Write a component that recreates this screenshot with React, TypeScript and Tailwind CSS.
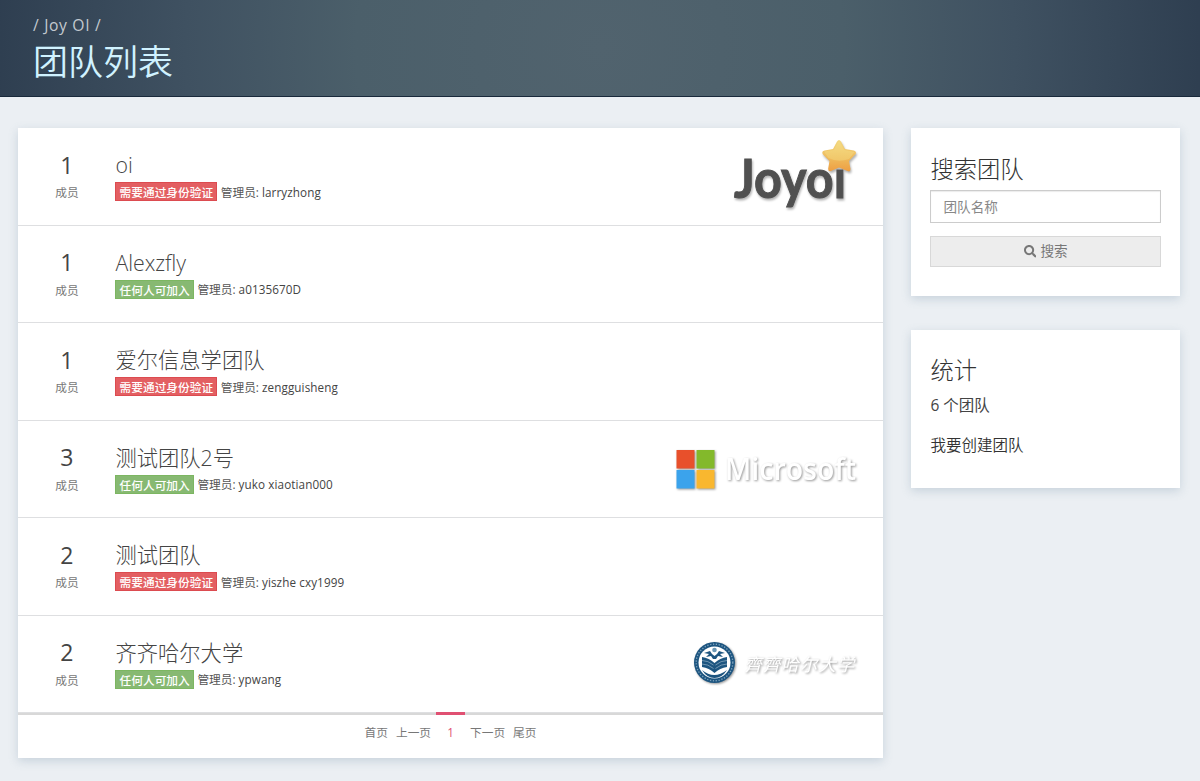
import { FaSearch } from "react-icons/fa";

type Team = {
  count: number;
  name: string;
  open: boolean;
  admins: string;
  logo?: "joyoi" | "microsoft" | "qqhru";
};

const teams: Team[] = [
  { count: 1, name: "oi", open: false, admins: "larryzhong", logo: "joyoi" },
  { count: 1, name: "Alexzfly", open: true, admins: "a0135670D" },
  { count: 1, name: "爱尔信息学团队", open: false, admins: "zengguisheng" },
  { count: 3, name: "测试团队2号", open: true, admins: "yuko xiaotian000", logo: "microsoft" },
  { count: 2, name: "测试团队", open: false, admins: "yiszhe cxy1999" },
  { count: 2, name: "齐齐哈尔大学", open: true, admins: "ypwang", logo: "qqhru" },
];

function JoyoiLogo() {
  return (
    <svg className="h-[84px] w-[130px] drop-shadow-[1px_2px_1px_rgba(0,0,0,0.3)]" viewBox="0 0 130 84">
      <defs>
        <linearGradient id="star" x1="0" y1="0" x2="0" y2="1">
          <stop offset="0" stopColor="#f3d880" />
          <stop offset="0.6" stopColor="#efb95a" />
          <stop offset="1" stopColor="#ee9e42" />
        </linearGradient>
      </defs>
      <g fill="#505050" stroke="#505050" strokeWidth="1" fontFamily="Lato, sans-serif" fontWeight="700" fontSize="53">
        <text x="2" y="63" textLength="112" lengthAdjust="spacingAndGlyphs">
          Joyoı
        </text>
      </g>
      <path
        d="M105 6.500 Q107 3.500 109 6.500 L113 14 L122 15.500 Q125.500 17 123 19.800 L117 26 L118.500 34 Q118.500 37.500 115.500 36 L107 32.500 L99 36 Q96 37 96.200 33.500 L97.500 26 L91 19.500 Q89 16.500 92.500 15.500 L101 14 Z"
        fill="url(#star)"
      />
      <path d="M92 16.500 L101.500 15 L107 6 L112.500 15 L122.500 17 L117 24 Q106 28 96.500 23 Z" fill="#f6e58d" opacity="0.35" />
    </svg>
  );
}

function MicrosoftLogo() {
  return (
    <svg className="h-[50px] w-[196px] drop-shadow-[1px_1px_1px_rgba(0,0,0,0.4)]" viewBox="0 0 196 50">
      <rect x="6.500" y="5" width="18" height="18.500" fill="#e8502b" />
      <rect x="26.500" y="5" width="18" height="18.500" fill="#83b92b" />
      <rect x="6.500" y="25" width="18" height="18.500" fill="#3ba3ec" />
      <rect x="26.500" y="25" width="18" height="18.500" fill="#f9b72f" />
      <text x="55" y="35" textLength="131" lengthAdjust="spacingAndGlyphs" fill="#fff" fontFamily="Open Sans, sans-serif" fontWeight="600" fontSize="30">
        Microsoft
      </text>
    </svg>
  );
}

function QqhruLogo() {
  return (
    <svg className="h-[52px] w-[178px] drop-shadow-[1px_1px_1px_rgba(0,0,0,0.42)]" viewBox="0 0 178 52">
      <circle cx="26.500" cy="25.500" r="20.500" fill="#1d5580" />
      <circle cx="26.500" cy="25.500" r="18.300" fill="none" stroke="#7fa3bc" strokeWidth="1.300" strokeDasharray="1.300 1.600" />
      <circle cx="26.500" cy="25.500" r="16" fill="#fff" />
      <circle cx="26.500" cy="13" r="2.300" fill="#6b98b5" />
      <path d="M16 16 L22 14 L24 17 L26.500 19 L29 17 L31 14 L37 16 L32 17 L35 20 L30 19 L28 22 H25 L23 19 L18 20 L21 17 Z" fill="#1d5580" />
      <path d="M14 20 Q21 21 26.500 26 Q32 21 39 20 V30 Q32 31 26.500 36 Q21 31 14 30 Z" fill="#1d5580" />
      <path d="M14 23.500 Q20 23.500 25.500 28 M14 27 Q20 27 25.500 31.500 M39 23.500 Q33 23.500 27.500 28 M39 27 Q33 27 27.500 31.500" fill="none" stroke="#a9c2d2" strokeWidth=".6" />
      <path d="M14 33 Q26 43 39 33 Q34 41 26.500 41 Q19 41 14 33 Z" fill="#1d5580" />
      <g transform="translate(7.500 1) skewX(-14)">
        <text x="57" y="33.500" textLength="110" lengthAdjust="spacing" fill="#fff" fontFamily="Noto Sans CJK SC, sans-serif" fontWeight="400" fontSize="17.500">
          齊齊哈尔大学
        </text>
      </g>
    </svg>
  );
}

function TeamRow({ team }: { team: Team }) {
  return (
    <div className="flex h-[97.5px] border-b border-[#dedfe1]">
      <div className="w-[97px] pt-[21.5px] text-center">
        <div className="h-[30px] text-[23px] leading-[30px] text-[#444]">{team.count}</div>
        <div className="mt-[2.5px] h-[20px] text-[11.7px] leading-[20px] text-[#777]">成员</div>
      </div>
      <div className="flex-1 pt-[21px]">
        <div className="h-[32.5px] text-[21.3px] leading-[32px] font-light text-[#444]">{team.name}</div>
        <div className="flex h-[20px] items-center text-[11.7px] leading-[20px] text-[#555]">
          {team.open ? (
            <span className="h-[19px] border border-[#7cb661] bg-[#87b972] px-[3.2px] leading-[18px] font-medium text-white">任何人可加入</span>
          ) : (
            <span className="h-[19px] border border-[#dc4b50] bg-[#e35f62] px-[3.2px] leading-[18px] font-medium text-white">需要通过身份验证</span>
          )}
          <span className="ml-[3.5px]">管理员:</span>
          <span className="ml-[3px] tracking-[0.1px] text-[#444]">{team.admins}</span>
        </div>
      </div>
      <div className="shrink-0">
        {team.logo === "joyoi" && <div className="pr-[21px] pt-[7px]"><JoyoiLogo /></div>}
        {team.logo === "microsoft" && <div className="pr-[16.5px] pt-[24px]"><MicrosoftLogo /></div>}
        {team.logo === "qqhru" && <div className="pr-[16.5px] pt-[21.5px]"><QqhruLogo /></div>}
      </div>
    </div>
  );
}

const card = "bg-white shadow-[0_3px_9px_rgba(120,145,170,0.3)]";

export default function App() {
  return (
    <div className="h-[781px] overflow-hidden bg-[#ebeff3] font-['Open_Sans','Noto_Sans_CJK_SC',sans-serif]">
      <header className="h-[97px] border-b border-[#19293b] bg-[radial-gradient(ellipse_610px_600px_at_50%_50%,#51636e_0%,#4b5f6a_40%,#3f5161_68%,#2e3e50_100%)] pl-[33px] pt-[13px]">
        <div className="h-[24px] text-[15.7px] leading-[25px] tracking-[0.65px] text-[#c3c9cf]">/ Joy OI /</div>
        <h1 className="h-[48px] text-[35px] leading-[49px] font-[350] text-[#d0f2ff]">团队列表</h1>
      </header>
      <div className="flex items-start pl-[18.4px] pt-[31px]">
        <main className={`${card} h-[630px] w-[864.300px]`}>
          {teams.map((team) => (
            <TeamRow key={team.name} team={team} />
          ))}
          <nav className="flex h-[45px] justify-center border-t-2 border-[#d8d8d8] text-[11.7px] leading-[35px] text-[#777]">
            <span>首页</span>
            <span className="ml-[8px]">上一页</span>
            <span className="-mt-[3px] mx-[5px] h-[40px] w-[29px] border-t-3 border-[#e05072] text-center text-[#e05072]">1</span>
            <span>下一页</span>
            <span className="ml-[8px]">尾页</span>
          </nav>
        </main>
        <aside className="ml-[28.800px] flex w-[268.5px] flex-col gap-[34px]">
          <section className={`${card} h-[168px] px-[19px] pt-[24px]`}>
            <h2 className="h-[38px] text-[23.3px] leading-[34px] font-light text-[#333]">搜索团队</h2>
            <input
              className="block h-[33px] w-full border border-[#ccc] bg-white px-[12px] text-[13.6px] text-[#666] shadow-[inset_0_1px_1px_rgba(0,0,0,0.08)] outline-none placeholder:text-[#888]"
              placeholder="团队名称"
            />
            <button className="mt-[13px] flex h-[31px] w-full items-center justify-center gap-[4px] border border-[#d8d8d8] bg-[#ededed] text-[13.6px] text-[#777]">
              <FaSearch className="size-[12.5px]" />
              <span>搜索</span>
            </button>
          </section>
          <section className={`${card} h-[158px] px-[19px] pt-[23px]`}>
            <h2 className="h-[38px] text-[23.3px] leading-[34px] font-light text-[#333]">统计</h2>
            <p className="h-[28px] text-[15.5px] leading-[28px] text-[#444]">6 个团队</p>
            <p className="mt-[12px] h-[28px] text-[15.5px] leading-[28px] font-[350] text-[#333]">我要创建团队</p>
          </section>
        </aside>
      </div>
    </div>
  );
}
